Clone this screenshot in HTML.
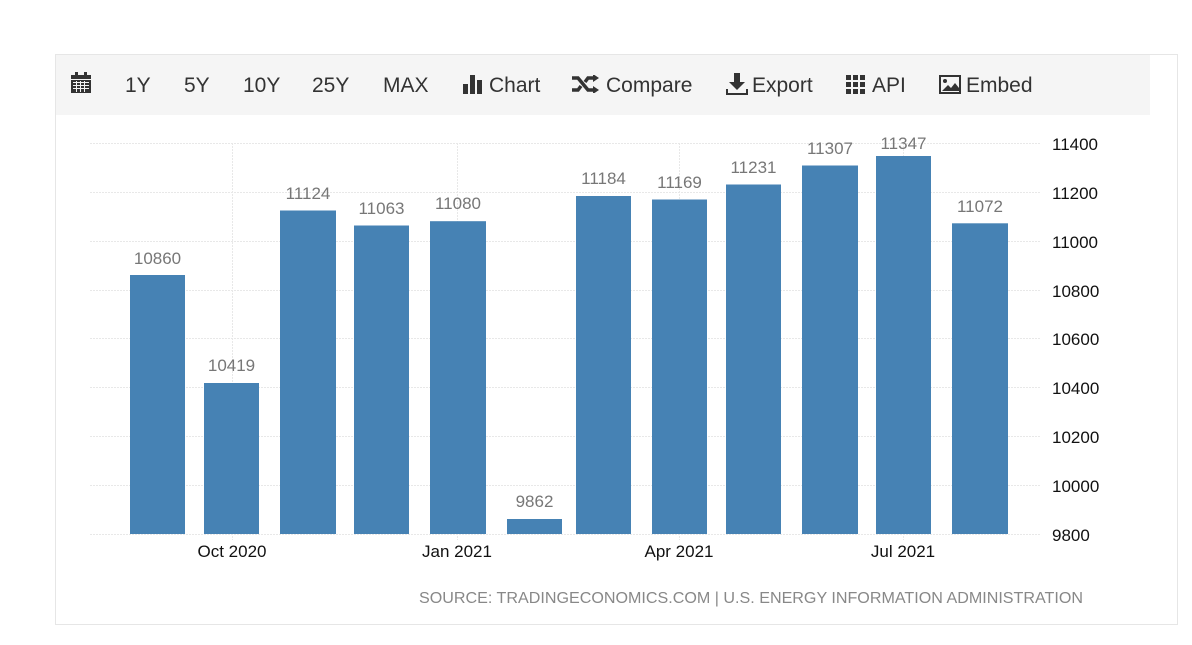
<!DOCTYPE html>
<html><head><meta charset="utf-8"><style>
body{margin:0;width:1192px;height:645px;background:#fff;font-family:"Liberation Sans",sans-serif;position:relative;overflow:hidden}
.box{position:absolute;left:55px;top:54px;width:1123px;height:571px;border:1px solid #e6e6e6;box-sizing:border-box}
.tb{position:absolute;left:56px;top:55px;width:1094px;height:60px;background:#f5f5f5}
.tb span{position:absolute;top:19px;font-size:21px;color:#333;white-space:nowrap}
</style></head><body>
<div class="box"></div>
<div class="tb">
<svg style="position:absolute;left:15px;top:17px" width="20" height="22" viewBox="0 0 20 22"><rect x="0" y="3" width="20" height="18" fill="#333"/><rect x="4" y="0" width="3" height="5" fill="#333"/><rect x="13" y="0" width="3" height="5" fill="#333"/><g fill="#f5f5f5"><rect x="0" y="7" width="20" height="1"/><rect x="2" y="10" width="16" height="1"/><rect x="2" y="13" width="16" height="1"/><rect x="2" y="16" width="16" height="1"/><rect x="5" y="9" width="1" height="11"/><rect x="9" y="9" width="1" height="11"/><rect x="13" y="9" width="1" height="11"/></g></svg>
<span style="left:69px">1Y</span><span style="left:128px">5Y</span><span style="left:187px">10Y</span><span style="left:256px">25Y</span><span style="left:327px">MAX</span>
<svg style="position:absolute;left:407px;top:20px" width="20" height="19"><rect x="0" y="9" width="5" height="10" fill="#333"/><rect x="7" y="0" width="5" height="19" fill="#333"/><rect x="14" y="5" width="5" height="14" fill="#333"/></svg>
<span style="left:433px">Chart</span>
<svg style="position:absolute;left:516px;top:20px" width="28" height="18" viewBox="0 0 28 18"><path d="M0 3h6l10 12h6M0 15h6l3-4M13 7l3-4h6" stroke="#333" stroke-width="3.5" fill="none"/><path d="M21 -1l6 4-6 4zM21 11l6 4-6 4z" fill="#333"/></svg>
<span style="left:550px">Compare</span>
<svg style="position:absolute;left:670px;top:18px" width="22" height="22"><path d="M8 0h6v9h5l-8 8-8-8h5z" fill="#333"/><path d="M0 16h2v4h18v-4h2v6H0z" fill="#333"/></svg>
<span style="left:696px">Export</span>
<svg style="position:absolute;left:790px;top:20px" width="19" height="19" fill="#333"><rect x="0" y="0" width="5" height="5"/><rect x="7" y="0" width="5" height="5"/><rect x="14" y="0" width="5" height="5"/><rect x="0" y="7" width="5" height="5"/><rect x="7" y="7" width="5" height="5"/><rect x="14" y="7" width="5" height="5"/><rect x="0" y="14" width="5" height="5"/><rect x="7" y="14" width="5" height="5"/><rect x="14" y="14" width="5" height="5"/></svg>
<span style="left:816px">API</span>
<svg style="position:absolute;left:883px;top:20px" width="22" height="19"><rect x="1" y="1" width="20" height="17" fill="none" stroke="#333" stroke-width="2"/><circle cx="6" cy="6" r="2" fill="#333"/><path d="M3 16l6-6 3 3 4-5 4 5v3z" fill="#333"/></svg>
<span style="left:910px">Embed</span>
</div>
<svg style="position:absolute;left:0;top:0" width="1192" height="645" font-family="Liberation Sans, sans-serif">
<g stroke="#e8e8e8" stroke-dasharray="2,1">
<line x1="90" x2="1040" y1="143.5" y2="143.5"/><line x1="90" x2="1040" y1="192.5" y2="192.5"/><line x1="90" x2="1040" y1="241.5" y2="241.5"/><line x1="90" x2="1040" y1="290.5" y2="290.5"/><line x1="90" x2="1040" y1="338.5" y2="338.5"/><line x1="90" x2="1040" y1="387.5" y2="387.5"/><line x1="90" x2="1040" y1="436.5" y2="436.5"/><line x1="90" x2="1040" y1="485.5" y2="485.5"/><line x1="90" x2="1040" y1="534.5" y2="534.5"/>
<line x1="232.5" x2="232.5" y1="143" y2="540"/><line x1="457.5" x2="457.5" y1="143" y2="540"/><line x1="679.5" x2="679.5" y1="143" y2="540"/><line x1="903.5" x2="903.5" y1="143" y2="540"/>
</g>
<g fill="#4682b4">
<rect x="130" y="275" width="55" height="259"/><rect x="204" y="383" width="55" height="151"/><rect x="280" y="210.5" width="56" height="323.5"/><rect x="354" y="225.5" width="55" height="308.5"/><rect x="430" y="221.2" width="56" height="312.8"/><rect x="507" y="519" width="55" height="15"/><rect x="576" y="196" width="55" height="338"/><rect x="652" y="199.5" width="55" height="334.5"/><rect x="726" y="184.5" width="55" height="349.5"/><rect x="802" y="165.5" width="56" height="368.5"/><rect x="876" y="156" width="55" height="378"/><rect x="952" y="223.3" width="56" height="310.7"/>
</g>
<g fill="#777" font-size="17" text-anchor="middle">
<text x="157.5" y="264">10860</text><text x="231.5" y="371">10419</text><text x="308" y="199">11124</text><text x="381.5" y="214">11063</text><text x="458" y="209">11080</text><text x="534.5" y="507">9862</text><text x="603.5" y="184">11184</text><text x="679.5" y="188">11169</text><text x="753.5" y="173">11231</text><text x="830" y="154">11307</text><text x="903.5" y="149">11347</text><text x="980" y="212">11072</text>
</g>
<g fill="#111" font-size="17">
<text x="1052" y="150">11400</text><text x="1052" y="199">11200</text><text x="1052" y="248">11000</text><text x="1052" y="297">10800</text><text x="1052" y="345">10600</text><text x="1052" y="394">10400</text><text x="1052" y="443">10200</text><text x="1052" y="492">10000</text><text x="1052" y="541">9800</text>
</g>
<g fill="#111" font-size="17" text-anchor="middle">
<text x="232" y="557">Oct 2020</text><text x="457" y="557">Jan 2021</text><text x="679" y="557">Apr 2021</text><text x="903" y="557">Jul 2021</text>
</g>
<text x="419" y="603" fill="#888" font-size="16" textLength="664" lengthAdjust="spacingAndGlyphs">SOURCE: TRADINGECONOMICS.COM | U.S. ENERGY INFORMATION ADMINISTRATION</text>
</svg>
</body></html>
